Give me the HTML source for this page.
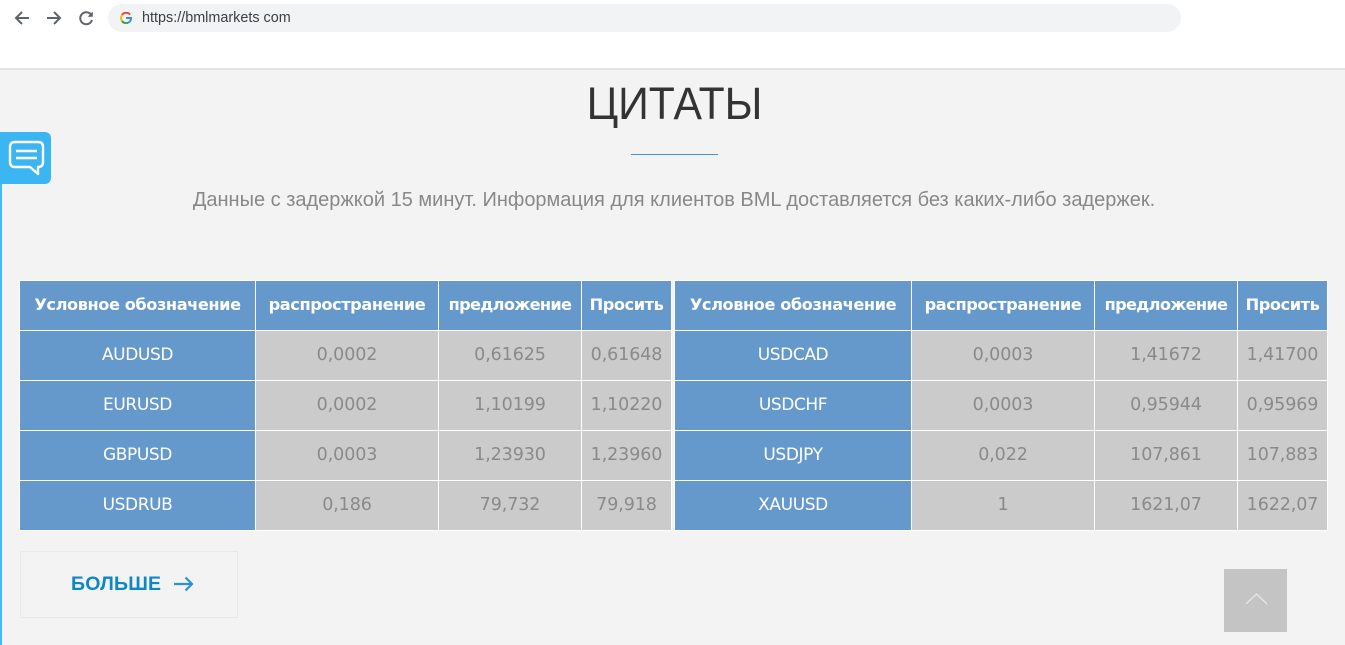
<!DOCTYPE html>
<html lang="ru"><head><meta charset="utf-8"><title>ЦИТАТЫ</title>
<style>
html,body{margin:0;padding:0}
body{width:1345px;height:645px;overflow:hidden;background:#f3f3f3;position:relative;font-family:"Liberation Sans",sans-serif}
.abs{position:absolute}
#top{left:0;top:0;width:1345px;height:68px;background:#fff;border-bottom:2px solid #e2e2e2}
#url{left:108px;top:4px;width:1073px;height:28px;border-radius:14px;background:#f1f3f4}
#urltxt{left:142px;top:10px;font-size:14.4px;line-height:16px;color:#3c4043;white-space:nowrap}
h1{position:absolute;margin:0;left:0;width:1349px;top:74px;text-align:center;font-weight:400;font-size:45px;line-height:60px;color:#333;transform:scaleX(.948);transform-origin:674.5px 30px}
#rule{left:631px;top:154px;width:87px;height:1px;background:#3a9bd0}
#sub{left:0;width:1348px;top:189px;text-align:center;font-size:20px;line-height:22px;color:#888}
#edge{left:0;top:180px;width:2px;height:465px;background:#3dbcf6}
#chat{left:0;top:132px;width:51px;height:52px;background:#3cb6f3;border-radius:0 6px 6px 0}
table{position:absolute;top:280px;border-collapse:collapse;table-layout:fixed;background:#fff}
td,th{padding:0 0 2px 0;border:1px solid #fff;text-align:center;height:47px;box-sizing:content-box;overflow:hidden;white-space:nowrap}
th{background:#6699cb;color:#fff;font:700 16.2px "DejaVu Sans",sans-serif;letter-spacing:-.43px}
th.p{letter-spacing:-.7px}
td{background:#cbcbcb;color:#8a8a8a;font:400 17.5px "DejaVu Sans",sans-serif;letter-spacing:-.1px}
td.s{background:#6699cb;color:#fff;letter-spacing:-.4px;font-size:17px}
#more{left:20px;top:551px;width:216px;height:65px;border:1px solid #e9e9e9}
#moretxt{left:71px;top:571px;font-size:19.5px;line-height:26px;font-weight:700;color:#0f87c5;letter-spacing:.2px}
#up{left:1224px;top:569px;width:63px;height:63px;background:#c4c4c4}
</style></head><body>
<div class="abs" id="top"></div>
<svg class="abs" style="left:0;top:0" width="100" height="36" viewBox="0 0 100 36" fill="none" stroke="#5f6368" stroke-width="2">
<path d="M29 18H16M22 12l-6 6 6 6"/><path d="M47 18h13M54 12l6 6-6 6"/>
<path d="M91 14.600A6 6 0 1 0 92 20"/><path d="M92.800 11.500v5.200h-5.200z" fill="#5f6368" stroke="none"/>
</svg>
<div class="abs" id="url"></div>
<svg class="abs" style="left:120px;top:12px" width="12" height="12" viewBox="0 0 12 12" fill="none" stroke-width="2">
<path d="M10 2.500A5 5 0 0 0 2 3" stroke="#ea4335"/><path d="M2 3a5 5 0 0 0 0 6" stroke="#fbbc05"/><path d="M2 9a5 5 0 0 0 7.500.8" stroke="#34a853"/><path d="M9.500 9.800A5 5 0 0 0 11 6H6" stroke="#4285f4"/>
</svg>
<div class="abs" id="urltxt">https://bmlmarkets com</div>
<h1>ЦИТАТЫ</h1>
<div class="abs" id="rule"></div>
<div class="abs" id="sub">Данные с задержкой 15 минут. Информация для клиентов BML доставляется без каких-либо задержек.</div>
<div class="abs" id="edge"></div>
<div class="abs" id="chat"></div>
<svg class="abs" style="left:0;top:132px" width="51" height="52" viewBox="0 0 51 52" fill="none" stroke="#fff" stroke-width="2.400">
<path d="M15 10h23q5 0 5 5v15q0 5-5 5v7l-8-7H15q-5 0-5-5V15q0-5 5-5z" stroke-linejoin="round"/>
<path d="M16 19h21M16 26h21"/>
</svg>
<table style="left:19px;width:653px">
<colgroup><col style="width:236px"><col style="width:183px"><col style="width:143px"><col style="width:90px"></colgroup>
<tr><th>Условное обозначение</th><th>распространение</th><th class="p">предложение</th><th>Просить</th></tr>
<tr><td class="s">AUDUSD</td><td>0,0002</td><td>0,61625</td><td>0,61648</td></tr>
<tr><td class="s">EURUSD</td><td>0,0002</td><td>1,10199</td><td>1,10220</td></tr>
<tr><td class="s">GBPUSD</td><td>0,0003</td><td>1,23930</td><td>1,23960</td></tr>
<tr><td class="s">USDRUB</td><td>0,186</td><td>79,732</td><td>79,918</td></tr>
</table>
<table style="left:674px;width:654px">
<colgroup><col style="width:237px"><col style="width:183px"><col style="width:143px"><col style="width:90px"></colgroup>
<tr><th>Условное обозначение</th><th>распространение</th><th class="p">предложение</th><th>Просить</th></tr>
<tr><td class="s">USDCAD</td><td>0,0003</td><td>1,41672</td><td>1,41700</td></tr>
<tr><td class="s">USDCHF</td><td>0,0003</td><td>0,95944</td><td>0,95969</td></tr>
<tr><td class="s">USDJPY</td><td>0,022</td><td>107,861</td><td>107,883</td></tr>
<tr><td class="s">XAUUSD</td><td>1</td><td>1621,07</td><td>1622,07</td></tr>
</table>
<div class="abs" id="more"></div>
<div class="abs" id="moretxt">БОЛЬШЕ</div>
<svg class="abs" style="left:172px;top:575px" width="22" height="18" viewBox="0 0 22 18" fill="none" stroke="#2b93cb" stroke-width="2.200"><path d="M2 9h18M13.500 2.500L20 9l-6.500 6.500"/></svg>
<div class="abs" id="up"></div>
<svg class="abs" style="left:1243px;top:589px" width="26" height="18" viewBox="0 0 26 18" fill="none" stroke="#e4e4e4" stroke-width="1.500"><path d="M3 15L13.500 5 24 15"/></svg>
</body></html>
